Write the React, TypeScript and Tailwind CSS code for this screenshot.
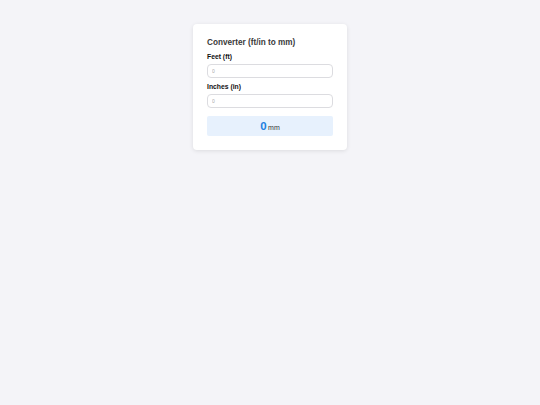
import React, { useState } from "react";

export default function App() {
  const [feet, setFeet] = useState("");
  const [inches, setInches] = useState("");
  const mm = Math.round(((parseFloat(feet) || 0) * 12 + (parseFloat(inches) || 0)) * 25.4 * 100) / 100;
  return (
    <div
      className="min-h-screen w-full bg-[#f4f4f8] flex justify-center pt-[24px]"
      style={{ fontFamily: '"Liberation Sans", Arial, sans-serif' }}
    >
      <div className="w-[154px] h-fit bg-white rounded-[4px] shadow-[0_1px_4px_rgba(0,0,0,0.1)] px-[14px] pt-[13px] pb-[14px]">
        <h1 className="text-[8.2px] leading-[12px] font-bold text-[#3a3a3a] mb-[3px]">Converter (ft/in to mm)</h1>
        <label className="block text-[6.8px] leading-[10px] font-bold text-[#111] mb-[2px]">Feet (ft)</label>
        <input
          value={feet}
          onChange={(e) => setFeet(e.target.value)}
          placeholder="0"
          className="block w-full h-[14px] border border-[#dcdce0] rounded-[4px] px-[4px] text-[5px] text-[#333] placeholder:text-[#aaa] outline-none mb-[4px]"
        />
        <label className="block text-[6.8px] leading-[10px] font-bold text-[#111] mb-[2px]">Inches (in)</label>
        <input
          value={inches}
          onChange={(e) => setInches(e.target.value)}
          placeholder="0"
          className="block w-full h-[14px] border border-[#dcdce0] rounded-[4px] px-[4px] text-[5px] text-[#333] placeholder:text-[#aaa] outline-none mb-[8px]"
        />
        <div className="h-[20px] bg-[#e7f1fd] rounded-[2px] flex items-baseline justify-center gap-[1.5px] pt-[3px]">
          <span className="text-[11.5px] leading-[14px] font-bold text-[#1e7fe0]">{mm}</span>
          <span className="text-[7px] leading-[10px] text-[#333]">mm</span>
        </div>
      </div>
    </div>
  );
}
